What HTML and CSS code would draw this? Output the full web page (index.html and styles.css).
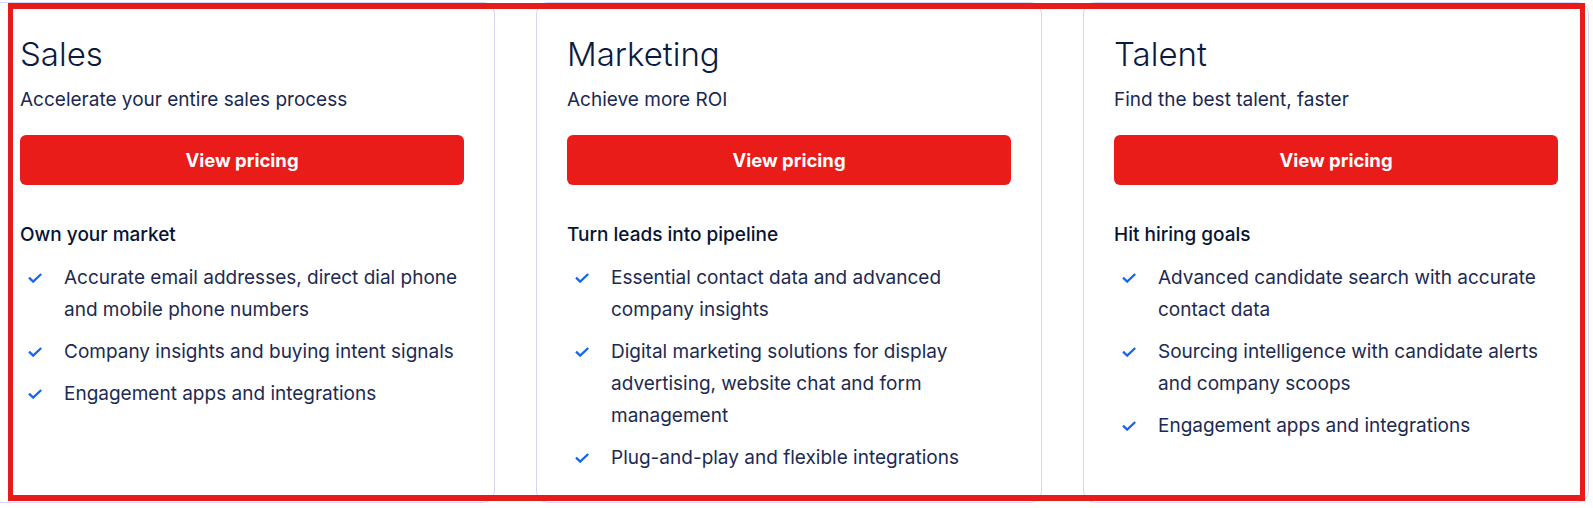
FILE: index.html
```html
<!DOCTYPE html>
<html lang="en">
<head>
<meta charset="utf-8">
<title>Pricing plans</title>
<link rel="stylesheet" href="styles.css">
</head>
<body>
<div class="plans">
  <section class="card">
    <h2 class="title">Sales</h2>
    <p class="subtitle">Accelerate your entire sales process</p>
    <a class="btn" href="#">View pricing</a>
    <h3 class="heading">Own your market</h3>
    <ul class="features">
      <li><svg class="check" viewBox="0 0 14 10"><path d="M1 4.6 L5.2 8.6 L13.2 1"/></svg><span>Accurate email addresses, direct dial phone and mobile phone numbers</span></li>
      <li><svg class="check" viewBox="0 0 14 10"><path d="M1 4.6 L5.2 8.6 L13.2 1"/></svg><span>Company insights and buying intent signals</span></li>
      <li><svg class="check" viewBox="0 0 14 10"><path d="M1 4.6 L5.2 8.6 L13.2 1"/></svg><span>Engagement apps and integrations</span></li>
    </ul>
  </section>
  <section class="card">
    <h2 class="title">Marketing</h2>
    <p class="subtitle">Achieve more ROI</p>
    <a class="btn" href="#">View pricing</a>
    <h3 class="heading">Turn leads into pipeline</h3>
    <ul class="features">
      <li><svg class="check" viewBox="0 0 14 10"><path d="M1 4.6 L5.2 8.6 L13.2 1"/></svg><span>Essential contact data and advanced company insights</span></li>
      <li><svg class="check" viewBox="0 0 14 10"><path d="M1 4.6 L5.2 8.6 L13.2 1"/></svg><span>Digital marketing solutions for display advertising, website chat and form management</span></li>
      <li><svg class="check" viewBox="0 0 14 10"><path d="M1 4.6 L5.2 8.6 L13.2 1"/></svg><span>Plug-and-play and flexible integrations</span></li>
    </ul>
  </section>
  <section class="card">
    <h2 class="title">Talent</h2>
    <p class="subtitle">Find the best talent, faster</p>
    <a class="btn" href="#">View pricing</a>
    <h3 class="heading">Hit hiring goals</h3>
    <ul class="features">
      <li><svg class="check" viewBox="0 0 14 10"><path d="M1 4.6 L5.2 8.6 L13.2 1"/></svg><span>Advanced candidate search with accurate contact data</span></li>
      <li><svg class="check" viewBox="0 0 14 10"><path d="M1 4.6 L5.2 8.6 L13.2 1"/></svg><span>Sourcing intelligence with candidate alerts and company scoops</span></li>
      <li><svg class="check" viewBox="0 0 14 10"><path d="M1 4.6 L5.2 8.6 L13.2 1"/></svg><span>Engagement apps and integrations</span></li>
    </ul>
  </section>
</div>
<div class="highlight"></div>
</body>
</html>
```
FILE: styles.css
```css
* { box-sizing: border-box; }
html, body { margin: 0; padding: 0; background: #ffffff; }
body {
  font-family: Inter, "Noto Sans", sans-serif;
  color: #16244a;
  overflow: hidden;
  width: 1593px;
  height: 508px;
  position: relative;
}
.plans {
  display: flex;
  gap: 41px;
  margin-left: -11px;
  padding-top: 2px;
}
.card {
  flex: none;
  width: 506px;
  height: 501px;
  border: 1px solid #d5d6f3;
  border-radius: 12px;
  padding: 31px 30px 0 30px;
  display: flex;
  flex-direction: column;
}
.title {
  margin: 0;
  font-size: 33px;
  line-height: 40px;
  font-weight: 300;
  color: #0b1a40;
}
.subtitle {
  margin: 12px 0 0 0;
  font-size: 19px;
  line-height: 28px;
  font-weight: 400;
  color: #1a2850;
}
.btn {
  margin-top: 21px;
  height: 50px;
  border-radius: 6px;
  background: #e91c1a;
  color: #ffffff;
  text-decoration: none;
  font-size: 18.5px;
  font-weight: 700;
  display: flex;
  align-items: center;
  justify-content: center;
}
.heading {
  margin: 36px 0 0 0;
  font-size: 19px;
  line-height: 28px;
  font-weight: 500;
  color: #071433;
}
.features {
  list-style: none;
  margin: 13px 0 0 0;
  padding: 0;
  display: flex;
  flex-direction: column;
  gap: 10px;
}
.features li {
  display: flex;
  align-items: flex-start;
  font-size: 19px;
  line-height: 32px;
  color: #1c2a52;
}
.check {
  flex: none;
  width: 14px;
  height: 10px;
  margin: 11px 22px 0 8px;
  fill: none;
  stroke: #1467f0;
  stroke-width: 2.3;
}
.highlight {
  position: absolute;
  left: 8px;
  top: 3px;
  width: 1577px;
  height: 498px;
  border: 5px solid #e81b1b;
  border-top-width: 6px;
  border-bottom-width: 6px;
  pointer-events: none;
}
```
